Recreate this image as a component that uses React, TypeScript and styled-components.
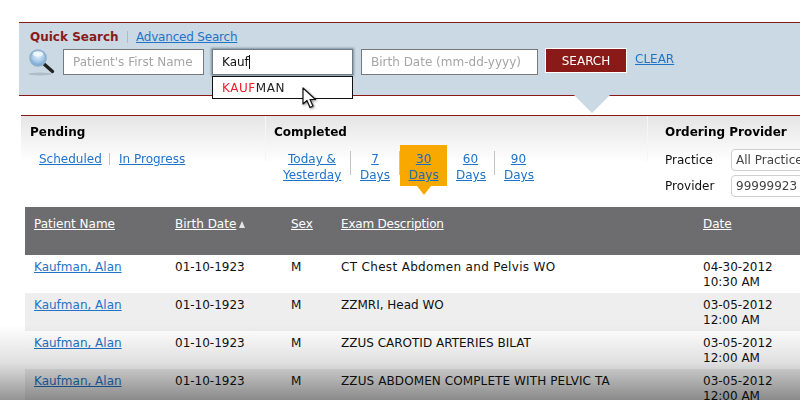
import React from 'react';
import styled, { createGlobalStyle } from 'styled-components';

const GlobalStyle = createGlobalStyle`
  html, body {
    margin: 0;
    padding: 0;
    background: #fff;
  }
  body {
    font-family: 'DejaVu Sans', Verdana, sans-serif;
    font-size: 12px;
    color: #111;
  }
`;

const Page = styled.div`
  position: relative;
  width: 800px;
  height: 400px;
  overflow: hidden;
  padding-top: 22px;
  box-sizing: border-box;
  filter: blur(0.25px);
`;

const FadeOverlay = styled.div`
  position: absolute;
  left: 0;
  right: 0;
  bottom: 0;
  height: 75px;
  pointer-events: none;
  background: linear-gradient(to bottom, rgba(0, 0, 0, 0), rgba(0, 0, 0, 0.12) 50%, rgba(0, 0, 0, 0.42));
`;

const Link = styled.a`
  color: #1f73c9;
  text-decoration: underline;
  cursor: pointer;
`;

const SearchPanel = styled.div`
  position: relative;
  width: 781px;
  height: 74px;
  margin-left: 19px;
  box-sizing: border-box;
  padding: 6px 0 0 11px;
  background: #cbd9e4;
  border-top: 1px solid #8a1a17;
  border-bottom: 1px solid #8a1a17;
`;

const Notch = styled.div`
  position: absolute;
  left: 555px;
  top: 72px;
  width: 0;
  height: 0;
  border-left: 18px solid transparent;
  border-right: 18px solid transparent;
  border-top: 18px solid #cbd9e4;
`;

const SearchTabs = styled.div`
  display: flex;
  align-items: center;
  height: 16px;
`;

const QuickLabel = styled.span`
  width: 88px;
  color: #8a1a17;
  font-size: 12px;
  font-weight: 700;
  white-space: nowrap;
`;

const TabDivider = styled.span`
  width: 1px;
  height: 12px;
  margin: 0 8px 0 9px;
  background: #aebbc6;
`;

const AdvancedLink = styled(Link)`
  letter-spacing: -0.2px;
`;

const SearchRow = styled.div`
  display: flex;
  align-items: flex-start;
  margin-top: 4px;
  margin-left: -3px;
`;

const GlassIcon = styled.svg`
  width: 28px;
  height: 28px;
  margin-right: 8px;
  flex: none;
`;

const TextField = styled.input<{ $width: number }>`
  width: ${({ $width }) => $width}px;
  height: 26px;
  margin-right: 8px;
  padding: 0 9px;
  box-sizing: border-box;
  border: 1px solid #77797c;
  background: #fff;
  font-family: inherit;
  font-size: 12px;
  outline: none;

  &::placeholder {
    color: #a5a5a5;
    opacity: 1;
  }
`;

const ComboWrap = styled.div`
  position: relative;
  width: 141px;
  margin-right: 8px;
`;

const FocusField = styled.div`
  display: flex;
  align-items: center;
  height: 26px;
  padding: 0 9px;
  box-sizing: border-box;
  background: #fff;
  border: 1px solid #6f7d8a;
  box-shadow: 0 0 2px 1px #7f8e9c;
  color: #111;
`;

const Caret = styled.span`
  width: 1px;
  height: 14px;
  background: #111;
`;

const Suggestions = styled.div`
  position: absolute;
  top: 27px;
  left: 0;
  width: 141px;
  height: 23px;
  padding-left: 9px;
  box-sizing: border-box;
  display: flex;
  align-items: center;
  background: #fff;
  border: 1px solid #111;
  color: #222;
  letter-spacing: 0.55px;
`;

const Match = styled.span`
  color: #f01c2c;
`;

const SearchButton = styled.button`
  width: 82px;
  height: 25px;
  margin: -1px 8px 0 -1px;
  padding: 0;
  border: 1px solid #fff;
  background: #8a1a17;
  color: #fff;
  font-family: inherit;
  font-size: 12px;
`;

const ClearLink = styled(Link)`
  margin-top: 3px;
`;

const FilterBar = styled.div`
  display: grid;
  grid-template-columns: 244px 382px 1fr;
  height: 92px;
  box-sizing: border-box;
  margin: 19px 0 0 21px;
  border-top: 1px solid #8a1a17;
  background: linear-gradient(to bottom, #e5e5e5, #fff 46px);
`;

const FilterSection = styled.div<{ $pad?: number }>`
  position: relative;
  padding: 9px 0 0 ${({ $pad }) => $pad ?? 9}px;
`;

const SectionSeparator = styled.span`
  position: absolute;
  left: 0;
  top: 0;
  width: 1px;
  height: 45px;
  background: #f6f6f6;
`;

const SectionTitle = styled.div`
  font-weight: 700;
  color: #000;
  line-height: 14px;
  white-space: nowrap;
`;

const LinkRow = styled.div<{ $left: number }>`
  display: flex;
  align-items: flex-start;
  margin: 12px 0 0 ${({ $left }) => $left}px;
`;

const RangeLink = styled(Link)<{ $width?: number }>`
  display: block;
  width: ${({ $width }) => ($width ? `${$width}px` : 'auto')};
  line-height: 16px;
  text-align: center;
  white-space: nowrap;
`;

const LinkDivider = styled.span`
  flex: none;
  width: 1px;
  height: 24px;
  margin: 0 9px;
  background: #c4c4c4;
`;

const ShortDivider = styled(LinkDivider)`
  height: 12px;
  margin: 2px 9px 0;
`;

const ActiveRange = styled.div`
  position: relative;
  display: flex;
  justify-content: center;
  flex: none;
  width: 47px;
  height: 41px;
  margin: -6px -10px 0 -9px;
  padding-top: 6px;
  box-sizing: border-box;
  background: #f9a800;

  &::after {
    content: '';
    position: absolute;
    left: 17px;
    top: 41px;
    border-left: 7px solid transparent;
    border-right: 7px solid transparent;
    border-top: 9px solid #f9a800;
  }

  a {
    color: #1f6cb8;
  }
`;

const ProviderForm = styled.div`
  display: grid;
  grid-template-columns: 66px 90px;
  row-gap: 4px;
  align-items: center;
  margin-top: 10px;
`;

const ProviderLabel = styled.span`
  color: #111;
`;

const ProviderValue = styled.div`
  height: 20px;
  line-height: 20px;
  padding-left: 4px;
  border: 1px solid #cfcfcf;
  border-radius: 4px;
  background: #fff;
  color: #444;
  white-space: nowrap;
  overflow: hidden;
`;

const ResultGrid = styled.div`
  margin-left: 25px;
  width: 775px;
`;

const columns = '141px 116px 50px 362px 1fr';

const HeaderRow = styled.div`
  display: grid;
  grid-template-columns: ${columns};
  height: 48px;
  padding: 10px 0 0 9px;
  box-sizing: border-box;
  background: #6d6d70;
`;

const HeaderLink = styled.a<{ $tight?: boolean }>`
  color: #fff;
  text-decoration: underline;
  white-space: nowrap;
  letter-spacing: ${({ $tight }) => ($tight ? '-0.2px' : 'normal')};
`;

const SortMark = styled.span`
  display: inline-block;
  margin-left: 3px;
  border-left: 3px solid transparent;
  border-right: 3px solid transparent;
  border-bottom: 7px solid #e6e6e6;
`;

const DataRow = styled.div<{ $striped: boolean }>`
  display: grid;
  grid-template-columns: ${columns};
  height: 38px;
  padding: 5px 0 0 9px;
  box-sizing: border-box;
  background: ${({ $striped }) => ($striped ? '#eeeeee' : '#fff')};
  line-height: 15px;
`;

const Cell = styled.span<{ $spread?: number }>`
  white-space: nowrap;
  line-height: 15px;
  letter-spacing: ${({ $spread }) => $spread ?? 0}px;
`;

const CursorIcon = styled.svg`
  position: absolute;
  left: 302px;
  top: 87px;
  width: 17px;
  height: 23px;
  filter: drop-shadow(1px 1px 1px rgba(0, 0, 0, 0.45));
`;

const rows = [
  { exam: 'CT Chest Abdomen and Pelvis WO', date: '04-30-2012', time: '10:30 AM', spread: 0.33 },
  { exam: 'ZZMRI, Head WO', date: '03-05-2012', time: '12:00 AM', spread: 0 },
  { exam: 'ZZUS CAROTID ARTERIES BILAT', date: '03-05-2012', time: '12:00 AM', spread: 0 },
  { exam: 'ZZUS ABDOMEN COMPLETE WITH PELVIC TA', date: '03-05-2012', time: '12:00 AM', spread: 0.1 },
];

export default function App() {
  return (
    <Page>
      <GlobalStyle />
      <SearchPanel>
        <SearchTabs>
          <QuickLabel>Quick Search</QuickLabel>
          <TabDivider />
          <AdvancedLink>Advanced Search</AdvancedLink>
        </SearchTabs>
        <SearchRow>
          <GlassIcon viewBox="0 0 28 28">
            <defs>
              <radialGradient id="lens" cx="50%" cy="35%" r="65%">
                <stop offset="0%" stopColor="#e8f3fb" />
                <stop offset="60%" stopColor="#a4c8e8" />
                <stop offset="100%" stopColor="#6d9fcf" />
              </radialGradient>
            </defs>
            <ellipse cx="13" cy="25" rx="12" ry="1.5" fill="#aebcc7" />
            <path d="M17 15 L25.5 22.5" stroke="#222" strokeWidth="3.4" strokeLinecap="round" />
            <circle cx="11" cy="9" r="8" fill="url(#lens)" stroke="#8fb0cc" strokeWidth="1.6" />
            <ellipse cx="11" cy="5" rx="5" ry="2.4" fill="#f4f9fd" opacity="0.85" />
          </GlassIcon>
          <TextField $width={141} placeholder="Patient's First Name" />
          <ComboWrap>
            <FocusField>
              Kauf
              <Caret />
            </FocusField>
            <Suggestions>
              <Match>KAUF</Match>MAN
            </Suggestions>
          </ComboWrap>
          <TextField $width={177} placeholder="Birth Date (mm-dd-yyyy)" />
          <SearchButton>SEARCH</SearchButton>
          <ClearLink>CLEAR</ClearLink>
        </SearchRow>
        <Notch />
      </SearchPanel>

      <FilterBar>
        <FilterSection>
          <SectionTitle>Pending</SectionTitle>
          <LinkRow $left={9}>
            <RangeLink $width={61}>Scheduled</RangeLink>
            <ShortDivider />
            <RangeLink>In Progress</RangeLink>
          </LinkRow>
        </FilterSection>
        <FilterSection>
          <SectionSeparator />
          <SectionTitle>Completed</SectionTitle>
          <LinkRow $left={9}>
            <RangeLink $width={58}>
              Today &amp;
              <br />
              Yesterday
            </RangeLink>
            <LinkDivider />
            <RangeLink $width={30}>
              7
              <br />
              Days
            </RangeLink>
            <LinkDivider />
            <ActiveRange>
              <RangeLink>
                30
                <br />
                Days
              </RangeLink>
            </ActiveRange>
            <LinkDivider />
            <RangeLink $width={29}>
              60
              <br />
              Days
            </RangeLink>
            <LinkDivider />
            <RangeLink $width={29}>
              90
              <br />
              Days
            </RangeLink>
          </LinkRow>
        </FilterSection>
        <FilterSection $pad={18}>
          <SectionSeparator />
          <SectionTitle>Ordering Provider</SectionTitle>
          <ProviderForm>
            <ProviderLabel>Practice</ProviderLabel>
            <ProviderValue>All Practices</ProviderValue>
            <ProviderLabel>Provider</ProviderLabel>
            <ProviderValue>99999923</ProviderValue>
          </ProviderForm>
        </FilterSection>
      </FilterBar>

      <ResultGrid>
        <HeaderRow>
          <span>
            <HeaderLink>Patient Name</HeaderLink>
          </span>
          <span>
            <HeaderLink>Birth Date</HeaderLink>
            <SortMark />
          </span>
          <span>
            <HeaderLink>Sex</HeaderLink>
          </span>
          <span>
            <HeaderLink $tight>Exam Description</HeaderLink>
          </span>
          <span>
            <HeaderLink>Date</HeaderLink>
          </span>
        </HeaderRow>
        {rows.map((row, idx) => (
          <DataRow $striped={idx % 2 === 1} key={idx}>
            <Cell>
              <Link>Kaufman, Alan</Link>
            </Cell>
            <Cell>01-10-1923</Cell>
            <Cell>M</Cell>
            <Cell $spread={row.spread}>{row.exam}</Cell>
            <Cell>
              {row.date}
              <br />
              {row.time}
            </Cell>
          </DataRow>
        ))}
      </ResultGrid>

      <FadeOverlay />
      <CursorIcon viewBox="0 0 17 23">
        <path
          d="M1 1 L1 17 L5 13.5 L8 20.5 L11 19 L8 12.5 L13.5 12.5 Z"
          fill="#fff"
          stroke="#111"
          strokeWidth="1.2"
          strokeLinejoin="round"
        />
      </CursorIcon>
    </Page>
  );
}
